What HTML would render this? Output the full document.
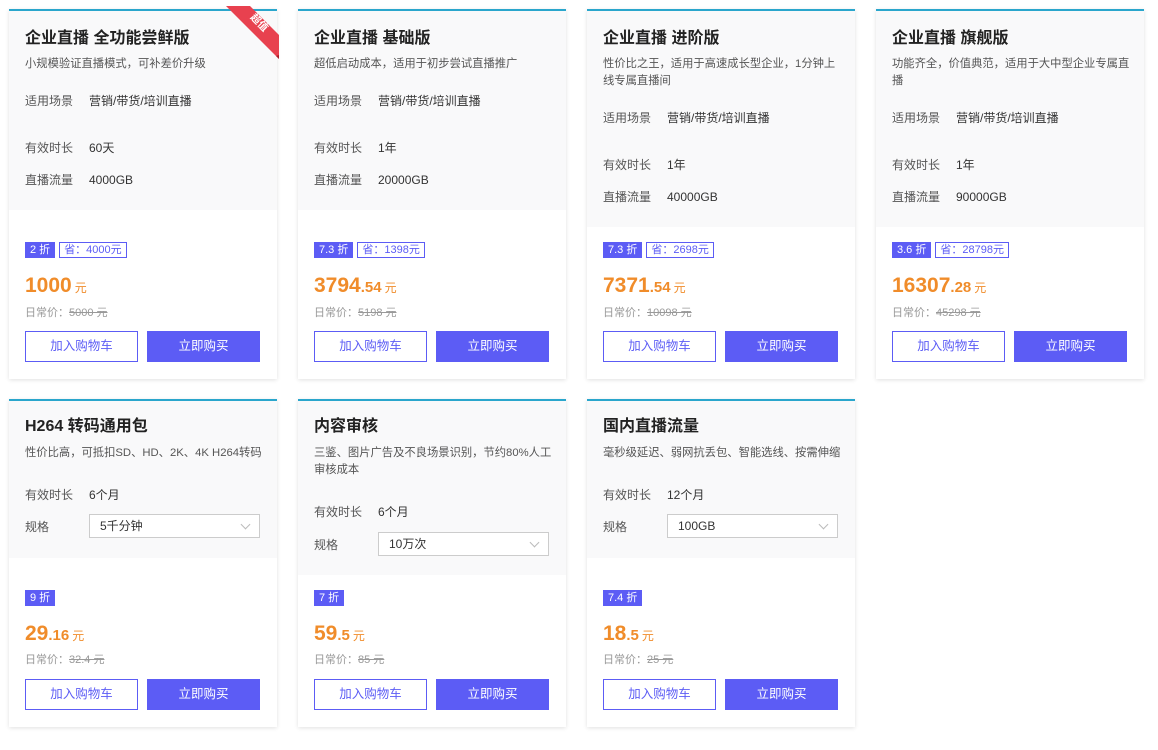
<!DOCTYPE html>
<html><head><meta charset="utf-8"><style>
*{margin:0;padding:0;box-sizing:border-box}
body{width:1158px;height:750px;background:#fff;font-family:"Liberation Sans","Noto Sans CJK SC",sans-serif;position:relative;overflow:hidden;color:#333}
.c{position:absolute;width:268px;background:#fff;border-top:2px solid #2aa6cc;box-shadow:0 1px 4px rgba(0,0,0,.12)}
.g{position:absolute;left:0;top:0;width:100%;background:#f9f9fa}
.a{position:absolute;white-space:nowrap}
.t{left:16px;font-size:16px;font-weight:bold;line-height:18px;color:#222}
.s{left:16px;font-size:11.3px;line-height:17px;color:#555}
.l{left:16px;font-size:12px;line-height:16px;color:#555}
.v{left:80px;font-size:12px;line-height:16px;color:#333}
.b{left:16px;height:16px;display:flex;gap:4px}
.b span{font-size:11px;line-height:14px;padding:0 4px;border:1px solid #5c5cf5}
.b .d{background:#5c5cf5;color:#fff}
.b .e{color:#5c5cf5}
.p{left:16px;color:#f08c2a;font-size:21px;font-weight:bold;line-height:22px}
.p small{font-size:15px}
.p i{font-style:normal;font-size:12px;font-weight:normal;margin-left:3px}
.o{left:16px;font-size:11px;line-height:14px;color:#999}
.o s{color:#999}
.btn{position:absolute;width:113px;height:31px;font-size:12.5px;line-height:29px;text-align:center;border:1px solid #5c5cf5}
.b1{left:16px;color:#5c5cf5;background:#fff}
.b2{left:138px;background:#5c5cf5;color:#fff}
.sel{position:absolute;left:80px;width:171px;height:24px;border:1px solid #ccc;background:#fff;font-size:12px;line-height:22px;padding-left:10px}
.sel:after{content:"";position:absolute;right:10px;top:6px;width:6px;height:6px;border-right:1px solid #bbb;border-bottom:1px solid #bbb;transform:rotate(45deg)}
</style></head><body>

<div class="c" style="left:9px;top:9px;height:370px">
<div class="g" style="height:199px"></div>
<div class="a t" style="top:19px">企业直播 全功能尝鲜版</div>
<div class="a s" style="top:45px">小规模验证直播模式，可补差价升级</div>
<div class="a l" style="top:82px">适用场景</div><div class="a v" style="top:82px">营销/带货/培训直播</div>
<div class="a l" style="top:129px">有效时长</div><div class="a v" style="top:129px">60天</div>
<div class="a l" style="top:161px">直播流量</div><div class="a v" style="top:161px">4000GB</div>
<div class="a b" style="top:231px"><span class="d">2 折</span><span class="e">省：4000元</span></div>
<div class="a p" style="top:264px">1000<i>元</i></div>
<div class="a o" style="top:295px">日常价：<s>5000 元</s></div>
<div class="btn b1" style="top:320px">加入购物车</div><div class="btn b2" style="top:320px">立即购买</div>
</div>

<div class="c" style="left:298px;top:9px;height:370px">
<div class="g" style="height:199px"></div>
<div class="a t" style="top:19px">企业直播 基础版</div>
<div class="a s" style="top:45px">超低启动成本，适用于初步尝试直播推广</div>
<div class="a l" style="top:82px">适用场景</div><div class="a v" style="top:82px">营销/带货/培训直播</div>
<div class="a l" style="top:129px">有效时长</div><div class="a v" style="top:129px">1年</div>
<div class="a l" style="top:161px">直播流量</div><div class="a v" style="top:161px">20000GB</div>
<div class="a b" style="top:231px"><span class="d">7.3 折</span><span class="e">省：1398元</span></div>
<div class="a p" style="top:264px">3794<small>.54</small><i>元</i></div>
<div class="a o" style="top:295px">日常价：<s>5198 元</s></div>
<div class="btn b1" style="top:320px">加入购物车</div><div class="btn b2" style="top:320px">立即购买</div>
</div>

<div class="c" style="left:587px;top:9px;height:370px">
<div class="g" style="height:216px"></div>
<div class="a t" style="top:19px">企业直播 进阶版</div>
<div class="a s" style="top:45px">性价比之王，适用于高速成长型企业，1分钟上<br>线专属直播间</div>
<div class="a l" style="top:99px">适用场景</div><div class="a v" style="top:99px">营销/带货/培训直播</div>
<div class="a l" style="top:146px">有效时长</div><div class="a v" style="top:146px">1年</div>
<div class="a l" style="top:178px">直播流量</div><div class="a v" style="top:178px">40000GB</div>
<div class="a b" style="top:231px"><span class="d">7.3 折</span><span class="e">省：2698元</span></div>
<div class="a p" style="top:264px">7371<small>.54</small><i>元</i></div>
<div class="a o" style="top:295px">日常价：<s>10098 元</s></div>
<div class="btn b1" style="top:320px">加入购物车</div><div class="btn b2" style="top:320px">立即购买</div>
</div>

<div class="c" style="left:876px;top:9px;height:370px">
<div class="g" style="height:216px"></div>
<div class="a t" style="top:19px">企业直播 旗舰版</div>
<div class="a s" style="top:45px">功能齐全，价值典范，适用于大中型企业专属直<br>播</div>
<div class="a l" style="top:99px">适用场景</div><div class="a v" style="top:99px">营销/带货/培训直播</div>
<div class="a l" style="top:146px">有效时长</div><div class="a v" style="top:146px">1年</div>
<div class="a l" style="top:178px">直播流量</div><div class="a v" style="top:178px">90000GB</div>
<div class="a b" style="top:231px"><span class="d">3.6 折</span><span class="e">省：28798元</span></div>
<div class="a p" style="top:264px">16307<small>.28</small><i>元</i></div>
<div class="a o" style="top:295px">日常价：<s>45298 元</s></div>
<div class="btn b1" style="top:320px">加入购物车</div><div class="btn b2" style="top:320px">立即购买</div>
</div>

<svg style="position:absolute;left:0;top:0" width="300" height="70">
<polygon points="226,6 250,6 279,35 279,59" fill="#e8414f"/>
<polygon points="276,56 279,59 279,55" fill="#a81e2a"/>
<text x="257" y="25" fill="#fff" font-size="10" font-weight="bold" font-family="Noto Sans CJK SC,sans-serif" text-anchor="middle" transform="rotate(45 257 25)">超值</text>
</svg>

<div class="c" style="left:9px;top:399px;height:328px">
<div class="g" style="height:157px"></div>
<div class="a t" style="top:17px">H264 转码通用包</div>
<div class="a s" style="top:44px">性价比高，可抵扣SD、HD、2K、4K H264转码</div>
<div class="a l" style="top:86px">有效时长</div><div class="a v" style="top:86px">6个月</div>
<div class="a l" style="top:118px">规格</div><div class="sel" style="top:113px">5千分钟</div>
<div class="a b" style="top:189px"><span class="d">9 折</span></div>
<div class="a p" style="top:222px">29<small>.16</small><i>元</i></div>
<div class="a o" style="top:252px">日常价：<s>32.4 元</s></div>
<div class="btn b1" style="top:278px">加入购物车</div><div class="btn b2" style="top:278px">立即购买</div>
</div>

<div class="c" style="left:298px;top:399px;height:328px">
<div class="g" style="height:174px"></div>
<div class="a t" style="top:17px">内容审核</div>
<div class="a s" style="top:44px">三鉴、图片广告及不良场景识别，节约80%人工<br>审核成本</div>
<div class="a l" style="top:103px">有效时长</div><div class="a v" style="top:103px">6个月</div>
<div class="a l" style="top:136px">规格</div><div class="sel" style="top:131px">10万次</div>
<div class="a b" style="top:189px"><span class="d">7 折</span></div>
<div class="a p" style="top:222px">59<small>.5</small><i>元</i></div>
<div class="a o" style="top:252px">日常价：<s>85 元</s></div>
<div class="btn b1" style="top:278px">加入购物车</div><div class="btn b2" style="top:278px">立即购买</div>
</div>

<div class="c" style="left:587px;top:399px;height:328px">
<div class="g" style="height:157px"></div>
<div class="a t" style="top:17px">国内直播流量</div>
<div class="a s" style="top:44px">毫秒级延迟、弱网抗丢包、智能选线、按需伸缩</div>
<div class="a l" style="top:86px">有效时长</div><div class="a v" style="top:86px">12个月</div>
<div class="a l" style="top:118px">规格</div><div class="sel" style="top:113px">100GB</div>
<div class="a b" style="top:189px"><span class="d">7.4 折</span></div>
<div class="a p" style="top:222px">18<small>.5</small><i>元</i></div>
<div class="a o" style="top:252px">日常价：<s>25 元</s></div>
<div class="btn b1" style="top:278px">加入购物车</div><div class="btn b2" style="top:278px">立即购买</div>
</div>

</body></html>
